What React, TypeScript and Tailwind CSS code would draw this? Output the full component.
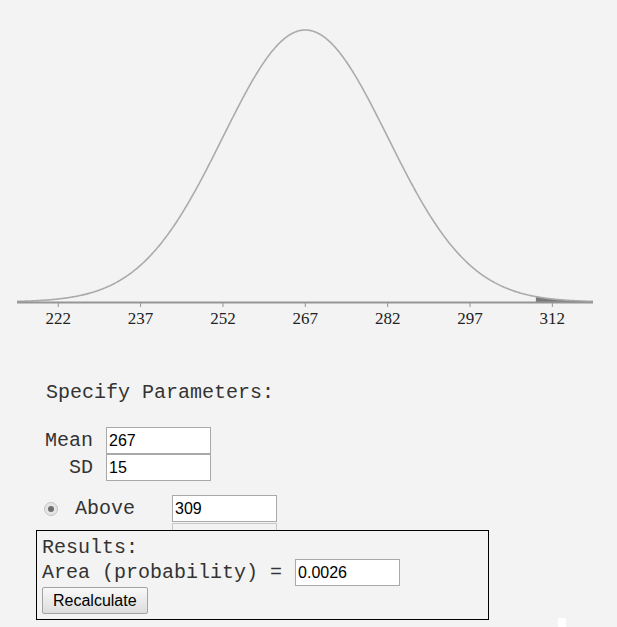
import React from "react";

const CX = 305.3;
const K = 5.49;
const BASE = 302;
const AMP = 272;
const MEAN = 267;
const SD = 15;

function xOf(v: number) {
  return CX + (v - MEAN) * K;
}
function yOf(v: number) {
  const z = (v - MEAN) / SD;
  return BASE - AMP * Math.exp(-(z * z) / 2);
}

function Chart() {
  const x0 = 17;
  const x1 = 593;
  const pts: string[] = [];
  for (let px = x0; px <= x1; px += 1) {
    const v = MEAN + (px - CX) / K;
    pts.push(`${px},${yOf(v).toFixed(2)}`);
  }
  const curve = "M" + pts.join(" L");
  const sx = xOf(309);
  const shadePts: string[] = [];
  for (let px = sx; px <= x1; px += 1) {
    const v = MEAN + (px - CX) / K;
    shadePts.push(`${px.toFixed(2)},${yOf(v).toFixed(2)}`);
  }
  const shade = `M${sx.toFixed(2)},${BASE} L${shadePts.join(" L")} L${x1},${BASE} Z`;
  const ticks = [222, 237, 252, 267, 282, 297, 312];
  return (
    <svg width="617" height="345" className="block">
      <path d={shade} fill="#7a7a7a" />
      <path d={curve} fill="none" stroke="#ababab" strokeWidth="1.6" />
      <line x1={x0} y1={BASE + 0.5} x2={x1} y2={BASE + 0.5} stroke="#959595" strokeWidth="2" />
      {ticks.map((t) => (
        <g key={t}>
          <line x1={xOf(t)} y1={BASE} x2={xOf(t)} y2={BASE + 5} stroke="#959595" strokeWidth="1" />
          <text
            x={xOf(t)}
            y={324}
            textAnchor="middle"
            fontFamily="'Liberation Serif', 'Times New Roman', serif"
            fontSize="17"
            fill="#222"
          >
            {t}
          </text>
        </g>
      ))}
    </svg>
  );
}

const mono = "font-['Liberation_Mono','Courier_New',monospace] text-[20px] text-[#333]";
const inputCls =
  "w-[105px] h-[27px] border border-[#a9a9a9] bg-white pl-[2px] font-['Liberation_Sans',Arial,sans-serif] text-[16px] text-black outline-none";

export default function App() {
  return (
    <div className="relative w-[617px] h-[627px] bg-[#f3f3f3] overflow-hidden">
      <Chart />
      <div className={`${mono} pl-[46px] pt-[36px] leading-[23px]`}>Specify Parameters:</div>
      <div className="mt-[23px] flex flex-col">
        <div className="flex items-center">
          <div className={`${mono} w-[93px] text-right leading-[27px]`}>Mean</div>
          <input className={`${inputCls} ml-[13px]`} defaultValue="267" />
        </div>
        <div className="flex items-center">
          <div className={`${mono} w-[93px] text-right leading-[27px]`}>SD</div>
          <input className={`${inputCls} ml-[13px]`} defaultValue="15" />
        </div>
      </div>
      <div className="mt-[14px] flex items-center">
        <div className="ml-[44px] w-[14px] h-[14px] rounded-full border border-[#c4c4c4] bg-[#e4e4e4] flex items-center justify-center">
          <div className="w-[6px] h-[6px] rounded-full bg-[#6e6e6e]" />
        </div>
        <div className={`${mono} ml-[17px] leading-[26px]`}>Above</div>
        <input className={`${inputCls} ml-[37px]`} defaultValue="309" />
      </div>
      <div className="ml-[172px] mt-[1px] w-[105px] h-[7px] border border-b-0 border-[#c8c8c8]" />
      <div className="ml-[36px] w-[453px] h-[90px] border border-black px-[5px] pt-[5px]">
        <div className={`${mono} leading-[23px]`}>Results:</div>
        <div className="flex items-center">
          <div className={`${mono} leading-[26px] whitespace-pre`}>Area (probability) = </div>
          <input className={`${inputCls} ml-[1px]`} defaultValue="0.0026" />
        </div>
        <button className="mt-px h-[27px] px-[10px] rounded-[2px] border border-[#a3a3a3] bg-gradient-to-b from-[#f8f8f8] to-[#dddddd] font-['Liberation_Sans',Arial,sans-serif] text-[16px] text-black">
          Recalculate
        </button>
      </div>
      <div className="absolute left-[558px] top-[618px] w-[8px] h-[9px] bg-white" />
    </div>
  );
}
